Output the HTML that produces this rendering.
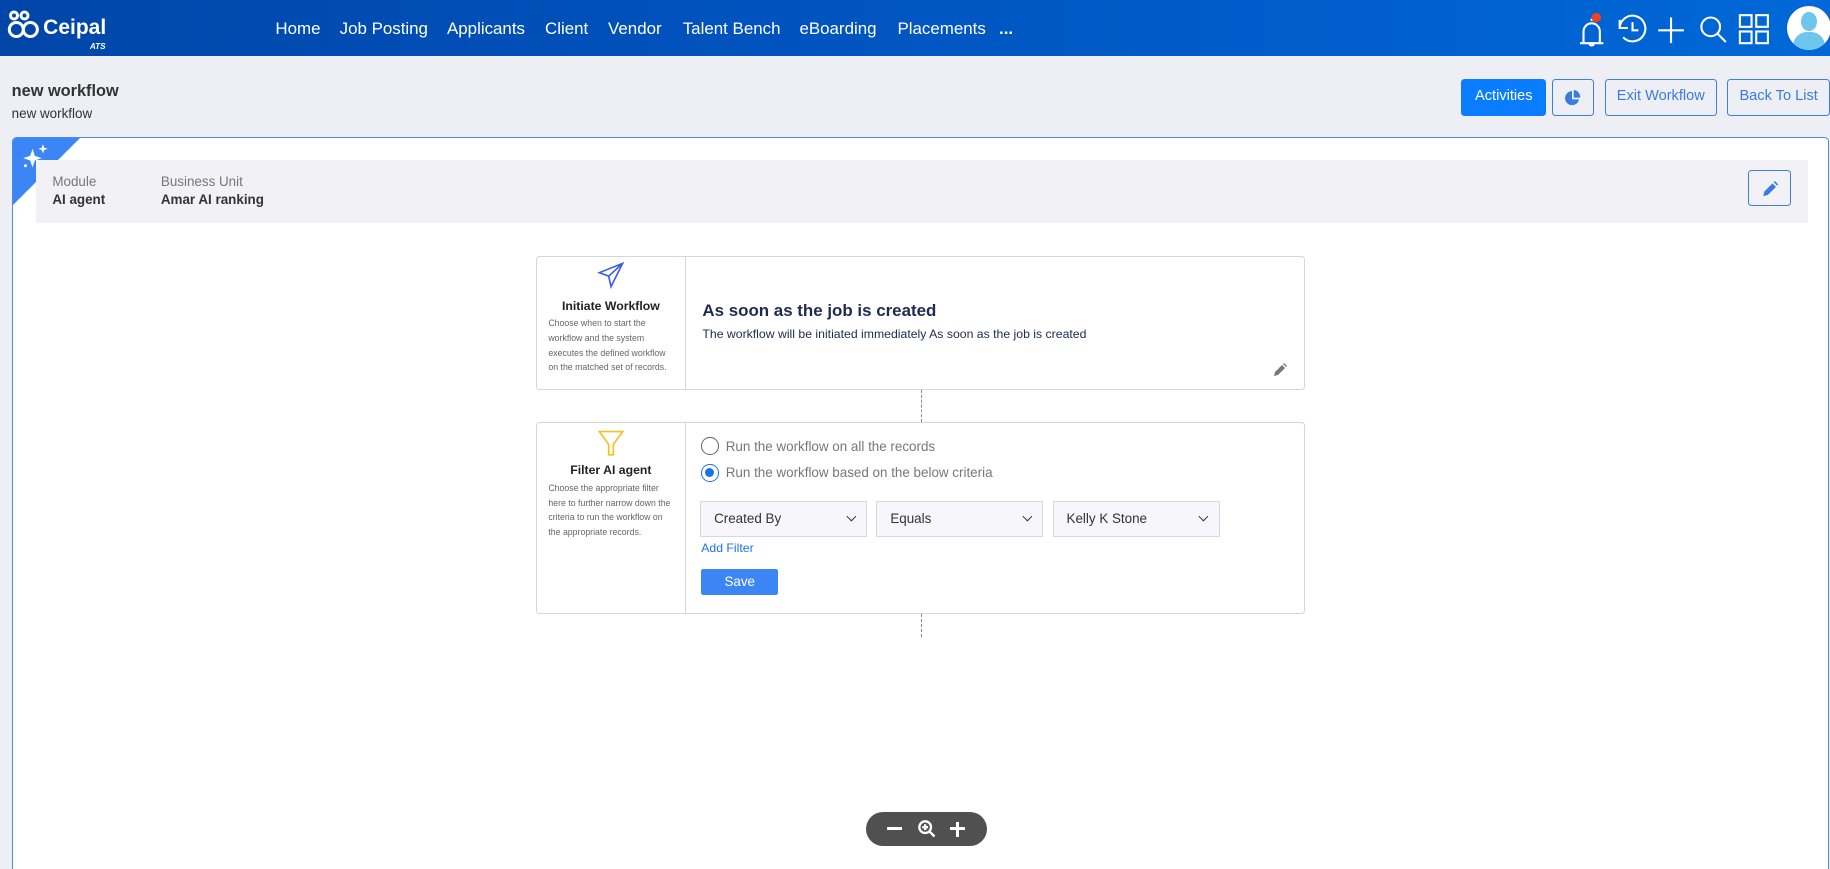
<!DOCTYPE html>
<html><head><meta charset="utf-8"><style>
*{box-sizing:border-box;margin:0;padding:0}
html,body{width:1830px;height:869px;overflow:hidden;background:#eeeff4}
#w{zoom:1.16709;width:1568px;height:745px;position:relative;font-family:"Liberation Sans",sans-serif;color:#333}
.a{position:absolute}
nav{position:absolute;left:0;top:0;width:1568px;height:48px;background:linear-gradient(90deg,#0046a8,#0052bd 40%,#0068d8)}
nav .it{position:absolute;top:16px;color:#fff;font-size:14.5px}
.btn{position:absolute;top:68px;height:31px;border:1px solid #3f7fe0;border-radius:3px;color:#3a7be0;font-size:12.5px;text-align:center;line-height:29px;background:#eeeff4}
.box{position:absolute;left:459px;width:659px;border:1px solid #d4d6de;border-radius:3px;background:#fff}
.lc{position:absolute;left:0;top:0;bottom:0;width:128px;border-right:1px solid #d4d6de;text-align:center}
.lc h4{font-size:10.5px;color:#222;margin-top:4px}
.lc p{font-size:7.5px;color:#666;text-align:left;padding:0 10px;line-height:12.5px;margin-top:3px}
.sel{position:absolute;top:429px;width:143px;height:31px;border:1px solid #d8d8e2;background:#f7f6fa;font-size:11.5px;color:#333;line-height:29px;padding-left:11px}
.sel:after{content:"";position:absolute;right:10px;top:10px;width:5px;height:5px;border-right:1.6px solid #333;border-bottom:1.6px solid #333;transform:rotate(45deg)}
</style></head><body><div id="w">
<nav>
<svg class="a" style="left:6px;top:4px" width="30" height="30" viewBox="0 0 30 30" fill="none" stroke="#fff" stroke-width="2.6"><circle cx="6" cy="9" r="3"/><circle cx="15" cy="9" r="3"/><circle cx="8" cy="21" r="6"/><circle cx="20" cy="21" r="6"/></svg>
<div class="a" style="left:37px;top:14px;color:#fff;font-size:18px;font-weight:bold">Ceipal</div>
<div class="a" style="left:77px;top:36px;color:#fff;font-size:7px;font-weight:bold;font-style:italic">ATS</div>
<span class="it" style="left:236px">Home</span><span class="it" style="left:291px">Job Posting</span><span class="it" style="left:383px">Applicants</span><span class="it" style="left:467px">Client</span><span class="it" style="left:521px">Vendor</span><span class="it" style="left:585px">Talent Bench</span><span class="it" style="left:685px">eBoarding</span><span class="it" style="left:769px">Placements</span><span class="it" style="left:856px;font-weight:bold">...</span>
<svg class="a" style="left:1348px;top:6px" width="200" height="38" viewBox="0 0 200 38" fill="none" stroke="#fff" stroke-width="1.8">
<path d="M6 31h20M9 31v-10a7 7 0 0 1 14 0v10M14 31a2 2 0 0 0 4 0M16 12v-2"/>
<circle cx="20" cy="9" r="4" fill="#f0421f" stroke="none"/>
<path d="M40 18a11 11 0 1 1 3 8M40 11v7h7M51 13v7h5"/>
<path d="M84 9v22M73 20h22"/>
<circle cx="118" cy="17" r="8"/><path d="M124 23l7 7"/>
<rect x="143" y="7" width="10" height="10"/><rect x="157" y="7" width="10" height="10"/><rect x="143" y="21" width="10" height="10"/><rect x="157" y="21" width="10" height="10"/>
</svg>
<div class="a" style="left:1531px;top:5px;width:38px;height:38px;border-radius:50%;background:#fff;overflow:hidden">
<div class="a" style="left:12px;top:5px;width:14px;height:17px;border-radius:50%;background:#6ec6ee"></div>
<div class="a" style="left:5px;top:22px;width:28px;height:20px;border-radius:12px 12px 0 0;background:#6ec6ee"></div></div>
</nav>
<div class="a" style="left:10px;top:70px;font-size:14px;font-weight:bold;color:#333">new workflow</div>
<div class="a" style="left:10px;top:91px;font-size:11.5px;color:#333">new workflow</div>
<div class="btn" style="left:1252px;width:73px;background:#0a7cff;border-color:#0a7cff;color:#fff">Activities</div>
<div class="btn" style="left:1330px;width:36px"><svg width="14" height="14" viewBox="0 0 14 14" style="margin-top:8px"><path d="M6 1a6 6 0 1 0 6 7H6z" fill="#3a7be0"/><path d="M7.5 0v6.5H13A6 6 0 0 0 7.5 0z" fill="#3a7be0"/></svg></div>
<div class="btn" style="left:1375px;width:96px">Exit Workflow</div>
<div class="btn" style="left:1480px;width:88px">Back To List</div>
<div class="a" style="left:10px;top:117px;width:1557px;height:640px;background:#fff;border:1px solid #4a8af4;border-radius:4px;overflow:hidden">
<div class="a" style="left:0;top:0;width:0;height:0;border-top:58px solid #3b86f4;border-right:58px solid transparent"></div>
<svg class="a" style="left:8px;top:5px" width="24" height="22" viewBox="0 0 24 22" fill="#fff"><path d="M9 5l2 6 6 2-6 2-2 6-2-6-6-2 6-2z"/><path d="M18 1l1 3 3 1-3 1-1 3-1-3-3-1 3-1z"/><circle cx="3" cy="19.5" r="1.3"/></svg>
<div class="a" style="left:20px;top:19px;width:1518px;height:54px;background:#f2f1f5"></div>
<div class="a" style="left:34px;top:31px;font-size:11.5px;color:#777">Module</div>
<div class="a" style="left:34px;top:47px;font-size:11.5px;font-weight:bold;color:#333">AI agent</div>
<div class="a" style="left:127px;top:31px;font-size:11.5px;color:#777">Business Unit</div>
<div class="a" style="left:127px;top:47px;font-size:11.5px;font-weight:bold;color:#333">Amar AI ranking</div>
<div class="a" style="left:1487px;top:28px;width:37px;height:31px;border:1px solid #3f7fe0;border-radius:3px"><svg width="14" height="14" viewBox="0 0 14 14" style="margin:8px 11px"><path d="M1 13l1-4 7-7 3 3-7 7z M10 1l1-1 3 3-1 1z" fill="#3a7be0"/></svg></div>
</div>
<div class="box" style="top:219px;height:115px">
<div class="lc"><svg width="24" height="24" viewBox="0 0 24 24" fill="none" stroke="#3c5de6" stroke-width="1.4" style="margin-top:4px"><path d="M22 2L2 10l8 3 2 9z M22 2L10 13"/></svg>
<h4>Initiate Workflow</h4><p>Choose when to start the workflow and the system executes the defined workflow on the matched set of records.</p></div>
<div class="a" style="left:142px;top:38px;font-size:14.5px;font-weight:bold;color:#1f2a4f">As soon as the job is created</div>
<div class="a" style="left:142px;top:60px;font-size:10.5px;color:#1f2a4f">The workflow will be initiated immediately As soon as the job is created</div>
<svg class="a" style="left:631px;top:91px" width="12" height="12" viewBox="0 0 14 14"><path d="M1 13l1-4 7-7 3 3-7 7z M10 1l1-1 3 3-1 1z" fill="#777"/></svg>
</div>
<div class="a" style="left:789px;top:334px;height:28px;border-left:1px dashed #888"></div>
<div class="box" style="top:362px;height:164px">
<div class="lc"><svg width="24" height="26" viewBox="0 0 24 26" fill="none" stroke="#f5c21a" stroke-width="1.4" style="margin-top:4px"><path d="M2 3h20l-8 11v9h-4v-9z"/></svg>
<h4 style="margin-top:0">Filter AI agent</h4><p>Choose the appropriate filter here to further narrow down the criteria to run the workflow on the appropriate records.</p></div>
<div class="a" style="left:141px;top:12px;width:15px;height:15px;border:1.4px solid #666;border-radius:50%"></div>
<div class="a" style="left:162px;top:13px;font-size:11.5px;color:#777">Run the workflow on all the records</div>
<div class="a" style="left:141px;top:35px;width:15px;height:15px;border:1.4px solid #1a73e8;border-radius:50%"><div style="margin:2px;width:8.2px;height:8.2px;border-radius:50%;background:#1a73e8"></div></div>
<div class="a" style="left:162px;top:36px;font-size:11.5px;color:#777">Run the workflow based on the below criteria</div>
<div class="a" style="left:141px;top:101px;font-size:10.5px;color:#1a73e8">Add Filter</div>
<div class="a" style="left:141px;top:125px;width:66px;height:22px;background:#3b86f4;border-radius:2px;color:#fff;font-size:11.5px;text-align:center;line-height:22px">Save</div>
</div>
<div class="sel" style="left:600px">Created By</div>
<div class="sel" style="left:751px">Equals</div>
<div class="sel" style="left:902px">Kelly K Stone</div>
<div class="a" style="left:789px;top:526px;height:20px;border-left:1px dashed #888"></div>
<div class="a" style="left:742px;top:696px;width:104px;height:29px;border-radius:15px;background:#505050">
<div class="a" style="left:18px;top:13px;width:13px;height:2.5px;background:#fff"></div>
<svg class="a" style="left:44px;top:6px" width="17" height="17" viewBox="0 0 17 17" fill="none" stroke="#fff" stroke-width="2"><circle cx="7" cy="7" r="5"/><path d="M11 11l4 4M7 4.5v5M4.5 7h5"/></svg>
<div class="a" style="left:72px;top:13px;width:13px;height:2.5px;background:#fff"></div>
<div class="a" style="left:77.2px;top:8px;width:2.5px;height:13px;background:#fff"></div>
</div>
</div></body></html>
